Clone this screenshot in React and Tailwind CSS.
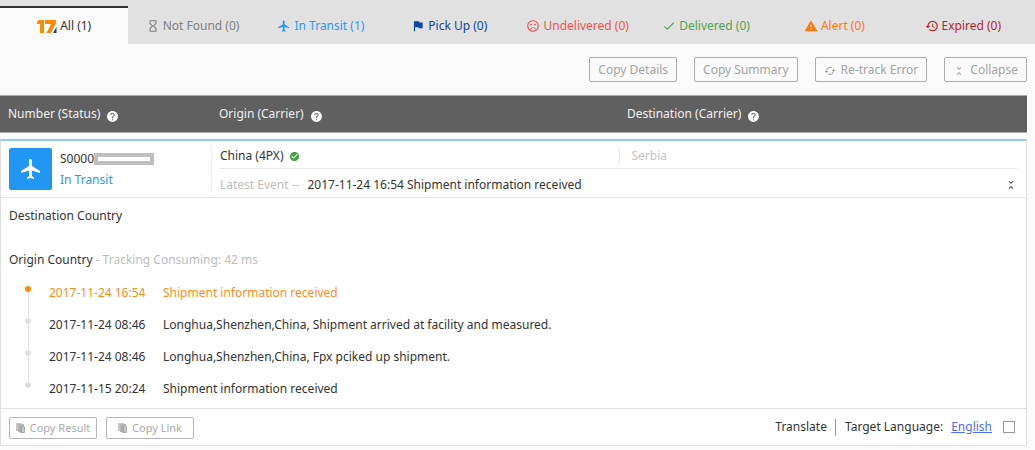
import { useState } from "react";
import {
  MdCached,
  MdCheckCircle,
  MdDone,
  MdFlag,
  MdFlight,
  MdHelp,
  MdHistory,
  MdHourglassEmpty,
  MdSentimentVeryDissatisfied,
  MdUnfoldLess,
  MdWarning,
} from "react-icons/md";

const tabs = [
  { id: "all", label: "All (1)", icon: Logo17, color: "text-[#333]" },
  { id: "notfound", label: "Not Found (0)", icon: MdHourglassEmpty, color: "text-[#808080]" },
  { id: "transit", label: "In Transit (1)", icon: MdFlight, color: "text-[#2f96f3]" },
  { id: "pickup", label: "Pick Up (0)", icon: MdFlag, color: "text-[#0d47a1]" },
  { id: "undelivered", label: "Undelivered (0)", icon: MdSentimentVeryDissatisfied, color: "text-[#f5534c]" },
  { id: "delivered", label: "Delivered (0)", icon: MdDone, color: "text-[#4ca350]" },
  { id: "alert", label: "Alert (0)", icon: MdWarning, color: "text-[#ff7a0d]" },
  { id: "expired", label: "Expired (0)", icon: MdHistory, color: "text-[#b92525]" },
];

const columns = ["Number (Status)", "Origin (Carrier)", "Destination (Carrier)"];

const events = [
  { time: "2017-11-24 16:54", text: "Shipment information received" },
  { time: "2017-11-24 08:46", text: "Longhua,Shenzhen,China, Shipment arrived at facility and measured." },
  { time: "2017-11-24 08:46", text: "Longhua,Shenzhen,China, Fpx pciked up shipment." },
  { time: "2017-11-15 20:24", text: "Shipment information received" },
];

function Logo17() {
  return (
    <svg viewBox="0 0 20 15" className="w-5 h-[15px]" aria-hidden="true">
      <path d="M0 2.500L2 1h5v13H3V5H0z" fill="#ff8c00" />
      <path d="M8 1h11v3L14 14H9.500L14 5H8z" fill="#ff8c00" />
      <path d="M19.500 8v6H16z" fill="#0d47a1" />
    </svg>
  );
}

function CopyIcon() {
  return (
    <svg viewBox="0 0 10 11" className="w-[10px] h-[11px]" aria-hidden="true">
      <path d="M0 0h6v8H0z" fill="#c8c8c8" />
      <path d="M2 1h6v8H2z" fill="#b4b4b4" />
      <path d="M4.500 3.500h4v6h-4z" fill="#c5cfca" stroke="#a8a8a8" />
      <path d="M5.500 4v5" stroke="#8eaa9d" />
    </svg>
  );
}

function ToolButton({ icon: Icon, children }) {
  return (
    <button className="flex items-center h-[25px] px-2 gap-[5px] border border-[#aaa] rounded-[2px] text-[#a3a3a3]">
      {Icon && <Icon className="w-3 h-3 mt-[2px]" />}
      {children}
    </button>
  );
}

function CopyButton({ children }) {
  return (
    <button className="flex items-center justify-center w-[88px] h-[22px] gap-1 border border-[#b5b5b5] rounded-[2px] text-[#aaa] text-[11px]">
      <CopyIcon />
      {children}
    </button>
  );
}

// Bagian atas kartu: nomor, negara asal dan tujuan
function PackageSummary() {
  return (
    <div className="flex items-center h-[57px] border-b border-[#e8e8e8]">
      <div className="flex items-center w-[210px] pl-2 gap-2">
        <div className="flex items-center justify-center w-[43px] h-[42px] rounded-[2px] bg-[#2196f3] text-white">
          <MdFlight className="w-6 h-6" />
        </div>
        <div className="leading-[21px]">
          <div className="flex items-center">
            S0000
            <span className="w-[60px] h-3 border-4 border-[#bfbfbf] bg-white" />
          </div>
          <a href="#transit" className="block text-[#2f96f3]">In Transit</a>
        </div>
      </div>

      <div className="flex-1 mr-[9px] pl-2 border-l border-[#eee]">
        <div className="flex items-center h-[21px] border-b border-[#e8e8e8] box-content pb-px">
          <div className="flex w-1/2 items-center gap-[6px]">
            China (4PX)
            <MdCheckCircle className="w-[11px] h-[11px] mt-px text-[#43a047]" />
          </div>
          <div className="w-1/2 h-4 pl-3 leading-4 border-l border-[#e8e8e8] text-[#c4c4c4]">Serbia</div>
        </div>
        <div className="flex items-center justify-between h-6 pt-2">
          <p>
            <span className="mr-2 text-[#bdbdbd]">Latest Event --</span>
            2017-11-24 16:54 Shipment information received
          </p>
          <button aria-label="Collapse package" className="text-[#555]">
            <MdUnfoldLess className="w-3 h-3" />
          </button>
        </div>
      </div>
    </div>
  );
}

function Timeline() {
  return (
    <ol className="pl-6">
      {events.map((ev, i) => (
        <li
          key={i}
          className={i === 0 ? "flex h-8 text-[#ff8c1a]" : "flex h-8"}
        >
          <div className="flex flex-col items-center w-[6px] mr-[18px] pt-2">
            <span
              className={
                i === 0
                  ? "w-[6px] h-[6px] shrink-0 rounded-full bg-[#ff8c00]"
                  : "w-[6px] h-[6px] shrink-0 rounded-full bg-[#dedede]"
              }
            />
            {i < events.length - 1 && <span className="w-px h-[26px] shrink-0 bg-[#dedede]" />}
          </div>
          <time className="w-[114px] leading-[30px]">{ev.time}</time>
          <span className="leading-[30px]">{ev.text}</span>
        </li>
      ))}
    </ol>
  );
}

export default function App() {
  const [active, setActive] = useState("all");
  const [translate, setTranslate] = useState(false);

  return (
    <div className="min-h-screen bg-[#fafafa] font-['Noto_Sans',sans-serif] text-[12px] leading-5 text-[#333]">
      {/* Tab status */}
      <nav className="pt-[6px] pr-2 bg-[#e1e1e1]">
        <div className="flex">
          {tabs.map(({ id, label, icon: Icon, color }) => (
            <button
              key={id}
              onClick={() => setActive(id)}
              className={`flex flex-1 items-center justify-center h-[38px] gap-[3px] border-t-2 whitespace-nowrap ${color} ${
                active === id ? "border-[#333] bg-[#fafafa]" : "border-transparent"
              }`}
            >
              <Icon className={id === "all" ? "" : "w-[14px] h-[14px]"} />
              {label}
            </button>
          ))}
        </div>
      </nav>

      <main className="pr-2">
        <div className="flex justify-end gap-[17px] py-[13px]">
          <ToolButton>Copy Details</ToolButton>
          <ToolButton>Copy Summary</ToolButton>
          <ToolButton icon={MdCached}>Re-track Error</ToolButton>
          <ToolButton icon={MdUnfoldLess}>Collapse</ToolButton>
        </div>

        <div className="grid grid-cols-[211px_1fr_1fr] h-[38px] items-center border-y border-[#aaa] bg-[#606060] text-[#f0f0f0]">
          {columns.map((col) => (
            <div key={col} className="flex items-center gap-[6px] px-2">
              {col}
              <MdHelp className="w-[13px] h-[13px] mt-1 text-white" />
            </div>
          ))}
        </div>

        <section className="mt-[6px] border border-t-2 border-[#e0e0e0] border-t-[#90caf9] bg-white">
          <PackageSummary />

          <div className="h-[211px] pt-2 border-b border-[#e0e0e0]">
            <h2 className="px-2">Destination Country</h2>
            <h2 className="px-2 pt-6">
              Origin Country <span className="text-[#bdbdbd]">- Tracking Consuming: 42 ms</span>
            </h2>
            <div className="pt-2">
              <Timeline />
            </div>
          </div>

          <div className="flex items-center justify-between h-9 pl-2 pr-[11px]">
            <div className="flex gap-[9px] pt-[2px]">
              <CopyButton>Copy Result</CopyButton>
              <CopyButton>Copy Link</CopyButton>
            </div>
            <div className="flex items-center">
              <label htmlFor="translate" className="pr-2">Translate</label>
              <span className="h-[17px] mr-[9px] border-l border-[#999]" />
              <span>Target Language:</span>
              <a href="#language" className="ml-2 text-[#4d6ff5] underline">English</a>
              <input
                id="translate"
                type="checkbox"
                checked={translate}
                onChange={(e) => setTranslate(e.target.checked)}
                className="w-3 h-3 ml-[11px] appearance-none border border-[#999] bg-white checked:bg-[#4d6ff5]"
              />
            </div>
          </div>
        </section>
      </main>
    </div>
  );
}
